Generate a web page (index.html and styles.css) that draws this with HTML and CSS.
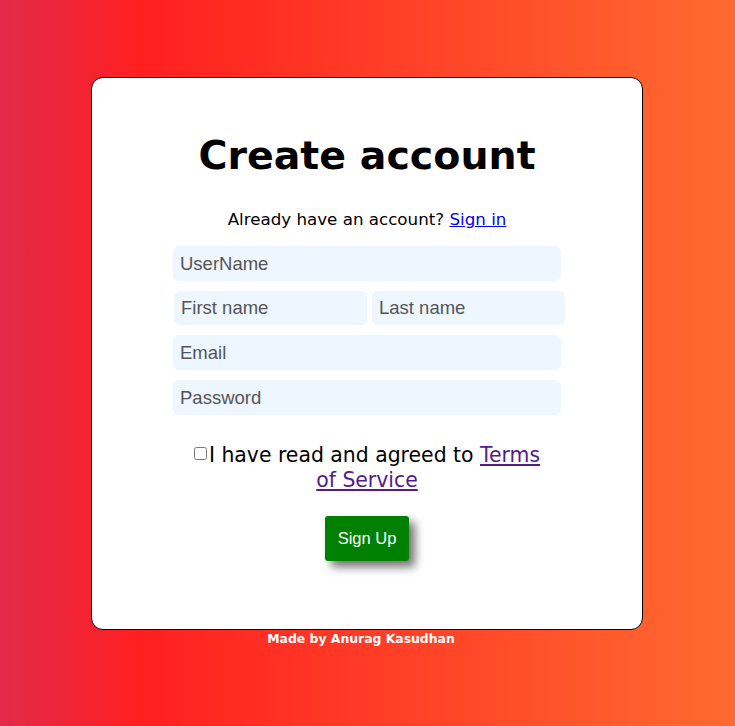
FILE: index.html
```html
<!DOCTYPE html>
<html>
<head>
<meta charset="utf-8">
<title>Create account</title>
<link rel="stylesheet" href="styles.css">
</head>
<body>
<main class="card">
  <h1 class="title">Create account</h1>
  <p class="signin">Already have an account? <a href="#" class="link-blue">Sign in</a></p>
  <form class="form">
    <input class="field" type="text" placeholder="UserName">
    <div class="row">
      <input class="field half" type="text" placeholder="First name">
      <input class="field half" type="text" placeholder="Last name">
    </div>
    <input class="field" type="email" placeholder="Email">
    <input class="field" type="password" placeholder="Password">
    <p class="terms"><input class="check" type="checkbox">I have read and agreed to <a href="#" class="link-visited">Terms of Service</a></p>
    <div class="actions">
      <button class="btn" type="button">Sign Up</button>
    </div>
  </form>
</main>
<footer class="footer">Made by Anurag Kasudhan</footer>
</body>
</html>
```
FILE: styles.css
```css
html, body {
  margin: 0;
  padding: 0;
}
body {
  min-height: 726px;
  padding-right: 1px;
  background: linear-gradient(to right, #e22a4b 0%, #ff1f20 19%, #ff6a30 100%);
  font-family: "DejaVu Sans", Verdana, sans-serif;
  overflow: hidden;
}
.card {
  box-sizing: border-box;
  width: 552px;
  height: 553px;
  margin: 77px auto 0;
  background: #fff;
  border: 1px solid #000;
  border-radius: 12px;
  display: flex;
  flex-direction: column;
  align-items: center;
}
.title {
  margin: 53px 0 0;
  font-size: 39.5px;
  line-height: 48px;
  font-weight: bold;
  color: #000;
}
.signin {
  margin: 29px 0 0;
  font-size: 16.7px;
  line-height: 22px;
  color: #000;
}
.link-blue { color: #0000ee; }
.link-visited { color: #551a8b; }
.form {
  margin-top: 16px;
  width: 388px;
  display: flex;
  flex-direction: column;
  gap: 10px;
}
.field {
  box-sizing: border-box;
  height: 35px;
  width: 388px;
  border: none;
  border-radius: 6px;
  background: #eef6ff;
  padding: 0 7px;
  font-family: "Liberation Sans", Arial, sans-serif;
  font-size: 18.5px;
  color: #333;
  outline: none;
}
.field::placeholder { color: #555; }
.row {
  display: flex;
  gap: 5px;
  margin-left: 1px;
  width: 391px;
}
.field.half {
  width: 193px;
  height: 34px;
}
.terms {
  margin: 18px auto 0;
  width: 352px;
  text-align: center;
  font-size: 20.4px;
  line-height: 25px;
  color: #000;
}
.check {
  margin: 0 2px 0 0;
  width: 13px;
  height: 13px;
  vertical-align: 2px;
}
.actions {
  display: flex;
  justify-content: center;
  margin-top: 13px;
}
.btn {
  width: 84px;
  height: 45px;
  border: none;
  border-radius: 3px;
  background: #008000;
  color: #fff;
  font-family: "Liberation Sans", Arial, sans-serif;
  font-size: 16.5px;
  box-shadow: 6px 6px 10px rgba(0, 0, 0, 0.55);
  cursor: pointer;
}
.footer {
  text-align: center;
  padding-right: 12px;
  margin-top: 1px;
  font-size: 12.4px;
  line-height: 15px;
  font-weight: bold;
  color: #fff;
}
```
